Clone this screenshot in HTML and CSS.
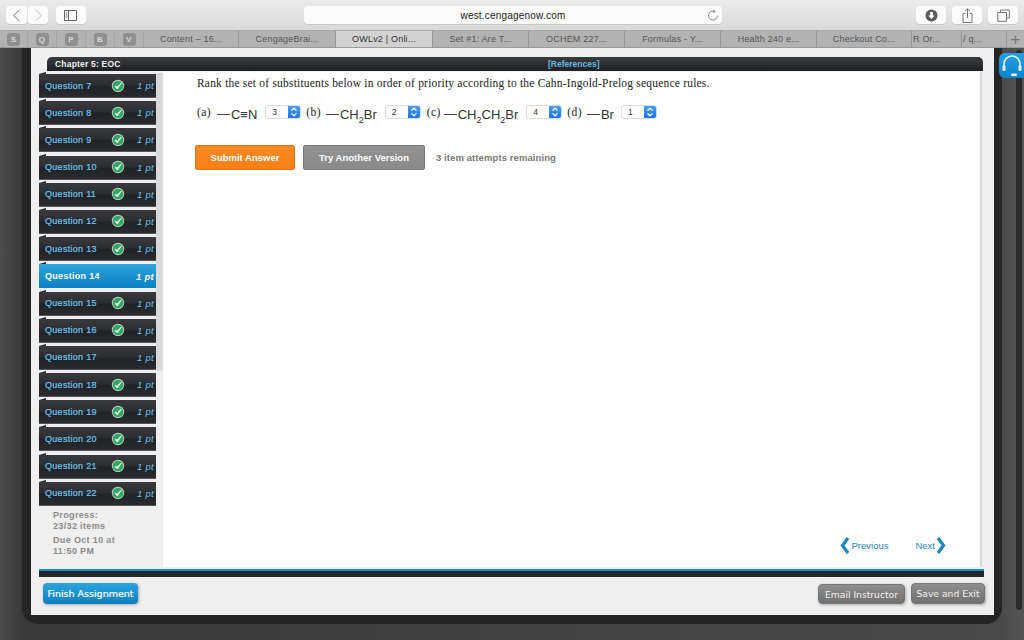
FILE: index.html
```html
<!DOCTYPE html>
<html lang="en">
<head>
<meta charset="utf-8">
<title>OWLv2</title>
<link rel="stylesheet" href="styles.css">
</head>
<body>
<svg class="defs" width="0" height="0" aria-hidden="true">
  <symbol id="ok" viewBox="0 0 14 14">
    <circle cx="7" cy="7.8" r="6.2" fill="#111" opacity=".45"/>
    <circle cx="7" cy="7" r="6.2" fill="#bcd2c4"/>
    <circle cx="7" cy="7" r="5.300" fill="#33a866"/>
    <path d="M4 7.300 6.200 10 10.400 4 6.300 7.900Z" fill="#fff" stroke="#fff" stroke-width=".7" stroke-linejoin="round"/>
  </symbol>
  <symbol id="updown" viewBox="0 0 12 14">
    <path d="M3.500 5.600 6 3.200 8.500 5.600M3.500 8.400 6 10.800 8.500 8.400" fill="none" stroke="#fff" stroke-width="1.300"/>
  </symbol>
</svg>

<header class="toolbar">
  <div class="btn-group">
    <button class="tool back"><svg width="9" height="13" viewBox="0 0 9 13"><path d="M7.500 1 1.500 6.500 7.500 12" fill="none" stroke="#777" stroke-width="1"/></svg></button>
    <button class="tool fwd"><svg width="9" height="13" viewBox="0 0 9 13"><path d="M1.500 1 7.500 6.500 1.500 12" fill="none" stroke="#c4c4c4" stroke-width="1"/></svg></button>
  </div>
  <button class="tool wide"><svg width="13" height="11" viewBox="0 0 13 11"><path d="M.5.5h12v10H.5zM4.500.5v10M1.700 3h1.600M1.700 5h1.600M1.700 7h1.600" fill="none" stroke="#666"/></svg></button>
  <div class="address">
    <span class="url">west.cengagenow.com</span>
    <svg class="reload" width="12" height="13" viewBox="0 0 12 13"><path d="M7.600 2.400A4.500 4.500 0 1 0 10.500 6.600" fill="none" stroke="#888"/><path d="M6.400.6 8.800 2.400 6.400 4.200Z" fill="#888"/></svg>
  </div>
  <div class="tool-right">
    <button class="tool wide"><svg width="13" height="13" viewBox="0 0 13 13"><circle cx="6.500" cy="6.500" r="6" fill="#5a5a5a"/><path d="M5.100 3h2.800v3.400h1.800L6.500 10 3.300 6.400h1.800Z" fill="#fff"/></svg></button>
    <button class="tool wide"><svg width="11" height="15" viewBox="0 0 11 15"><path d="M3.300 5.500H1v9h9v-9H7.700M5.500 10V1M3 3.200 5.500 .8 8 3.200" fill="none" stroke="#777"/></svg></button>
    <button class="tool wide"><svg width="13" height="13" viewBox="0 0 13 13"><path d="M3.500 3.500V1h8.800v8H9.500M.8 3.500h8.700v8.800H.8z" fill="none" stroke="#777"/></svg></button>
  </div>
</header>

<nav class="tabs">
  <div class="fav"><b>S</b></div>
  <div class="fav"><b>Q</b></div>
  <div class="fav"><b>P</b></div>
  <div class="fav"><b>B</b></div>
  <div class="fav last"><b>V</b></div>
  <div class="tab">Content – 16...</div>
  <div class="tab">CengageBrai...</div>
  <div class="tab active">OWLv2 | Onli...</div>
  <div class="tab">Set #1: Are T...</div>
  <div class="tab">OCHEM 227...</div>
  <div class="tab">Formulas - Y...</div>
  <div class="tab">Health 240 e...</div>
  <div class="tab">Checkout Co...</div>
  <div class="tab mini one">R Or...</div>
  <div class="tab mini two">/ q...</div>
  <div class="plus">+</div>
</nav>

<main class="stage">
  <div class="frame">
    <section class="panel">
      <div class="chapter">
        <span class="chapter-title">Chapter 5: EOC</span>
        <a class="refs">[References]</a>
      </div>
      <div class="body-row">
        <aside class="side">
          <div class="side-scroll"></div>
          <ul class="questions">
            <li class="q"><span class="q-name">Question 7</span><svg class="ok"><use href="#ok"/></svg><i>1 pt</i></li>
            <li class="q"><span class="q-name">Question 8</span><svg class="ok"><use href="#ok"/></svg><i>1 pt</i></li>
            <li class="q"><span class="q-name">Question 9</span><svg class="ok"><use href="#ok"/></svg><i>1 pt</i></li>
            <li class="q"><span class="q-name">Question 10</span><svg class="ok"><use href="#ok"/></svg><i>1 pt</i></li>
            <li class="q"><span class="q-name">Question 11</span><svg class="ok"><use href="#ok"/></svg><i>1 pt</i></li>
            <li class="q"><span class="q-name">Question 12</span><svg class="ok"><use href="#ok"/></svg><i>1 pt</i></li>
            <li class="q"><span class="q-name">Question 13</span><svg class="ok"><use href="#ok"/></svg><i>1 pt</i></li>
            <li class="q current"><span class="q-name">Question 14</span><i>1 pt</i></li>
            <li class="q"><span class="q-name">Question 15</span><svg class="ok"><use href="#ok"/></svg><i>1 pt</i></li>
            <li class="q"><span class="q-name">Question 16</span><svg class="ok"><use href="#ok"/></svg><i>1 pt</i></li>
            <li class="q"><span class="q-name">Question 17</span><i>1 pt</i></li>
            <li class="q"><span class="q-name">Question 18</span><svg class="ok"><use href="#ok"/></svg><i>1 pt</i></li>
            <li class="q"><span class="q-name">Question 19</span><svg class="ok"><use href="#ok"/></svg><i>1 pt</i></li>
            <li class="q"><span class="q-name">Question 20</span><svg class="ok"><use href="#ok"/></svg><i>1 pt</i></li>
            <li class="q"><span class="q-name">Question 21</span><svg class="ok"><use href="#ok"/></svg><i>1 pt</i></li>
            <li class="q"><span class="q-name">Question 22</span><svg class="ok"><use href="#ok"/></svg><i>1 pt</i></li>
          </ul>
          <div class="progress">
            <p>Progress:<br>23/32 items</p>
            <p>Due Oct 10 at<br>11:50 PM</p>
          </div>
        </aside>
        <article class="main">
          <div class="content">
            <p class="prompt">Rank the set of substituents below in order of priority according to the Cahn-Ingold-Prelog sequence rules.</p>
            <div class="answers">
              <span class="lab la">(a)</span><span class="chem ca"><span class="dash"></span>C≡N</span>
              <span class="sel">3<span class="step"><svg width="12" height="14"><use href="#updown"/></svg></span></span>
              <span class="lab lb">(b)</span><span class="chem cb"><span class="dash"></span>CH<sub>2</sub>Br</span>
              <span class="sel">2<span class="step"><svg width="12" height="14"><use href="#updown"/></svg></span></span>
              <span class="lab lc">(c)</span><span class="chem cc"><span class="dash"></span>CH<sub>2</sub>CH<sub>2</sub>Br</span>
              <span class="sel">4<span class="step"><svg width="12" height="14"><use href="#updown"/></svg></span></span>
              <span class="lab ld">(d)</span><span class="chem cd"><span class="dash"></span>Br</span>
              <span class="sel">1<span class="step"><svg width="12" height="14"><use href="#updown"/></svg></span></span>
            </div>
            <div class="actions">
              <button class="act submit">Submit Answer</button>
              <button class="act another">Try Another Version</button>
              <span class="remaining">3 item attempts remaining</span>
            </div>
          </div>
          <div class="pager">
            <a class="page prev"><svg width="10" height="17" viewBox="0 0 10 17"><path d="M8 1 2.500 8.500 8 16" fill="none" stroke="#1b87bf" stroke-width="3.200"/></svg>Previous</a>
            <a class="page next">Next<svg width="10" height="17" viewBox="0 0 10 17"><path d="M2 1 7.500 8.500 2 16" fill="none" stroke="#1b87bf" stroke-width="3.200"/></svg></a>
          </div>
        </article>
      </div>
      <div class="rule"></div>
      <footer class="foot">
        <button class="finish">Finish Assignment</button>
        <div class="foot-right">
          <button class="gray email">Email Instructor</button>
          <button class="gray save">Save and Exit</button>
        </div>
      </footer>
    </section>
  </div>
  <div class="help"><svg width="22" height="24" viewBox="0 0 22 24"><path d="M3 15V10a8 8 0 0 1 16 0v5" fill="none" stroke="#e4f2fa" stroke-width="1.600"/><rect x="1.500" y="11" width="3" height="6" rx="1.500" fill="#e4f2fa"/><rect x="17.500" y="11" width="3" height="6" rx="1.500" fill="#e4f2fa"/><rect x="10" y="19.500" width="6" height="2.500" rx="1.200" fill="#e4f2fa"/></svg></div>
  <div class="track"></div>
</main>
</body>
</html>
```

FILE: styles.css
```css
* { box-sizing: border-box; }
html, body { margin: 0; height: 640px; overflow: hidden; }
body { display: flex; flex-direction: column; font-family: "Liberation Sans", Arial, sans-serif; background: #444; }
.defs { position: absolute; }
button { font-family: inherit; padding: 0; cursor: default; }
p { margin: 0; }
ul { list-style: none; margin: 0; padding: 0; }

/* browser toolbar */
.toolbar { height: 30px; flex: none; display: flex; align-items: center; padding: 0 6px; background: linear-gradient(#ececec, #d9d9d9); }
.btn-group { display: flex; gap: 1px; margin-right: 8px; }
.tool { height: 18px; width: 20px; border: 0; border-radius: 4px; background: #fbfbfb; box-shadow: 0 1px 0 #c9c9c9; display: flex; align-items: center; justify-content: center; }
.tool.back { width: 21px; }
.tool.wide { width: 30px; }
.address { width: 419px; height: 18px; margin-left: 218px; border-radius: 4px; background: #fbfbfb; box-shadow: 0 1px 0 #c9c9c9; display: flex; align-items: center; justify-content: center; position: relative; }
.url { font-size: 10px; color: #222; letter-spacing: .2px; }
.reload { position: absolute; right: 3px; top: 3px; }
.tool-right { display: flex; gap: 6px; margin-left: 194px; }

/* tab strip */
.tabs { height: 18px; flex: none; display: flex; background: #b2b2b2; border-top: 1px solid #a8a8a8; border-bottom: 1px solid #9c9c9c; font-size: 9px; color: #555; letter-spacing: .2px; }
.fav { width: 29px; display: flex; align-items: center; justify-content: center; border-right: 1px solid #a6a6a6; }
.fav:first-child { width: 28px; }
.fav b { width: 13px; height: 13px; border-radius: 3px; background: #8f8f8f; color: #d8d8d8; font-size: 8px; display: flex; align-items: center; justify-content: center; }
.tab { width: 96px; display: flex; align-items: center; justify-content: center; border-right: 1px solid #969696; white-space: nowrap; }
.tab:nth-child(6) { width: 95px; }
.tab:nth-child(7), .tab:nth-child(8) { width: 97px; }
.tab:nth-child(13) { width: 95px; }
.tab.active { background: #d2d2d2; color: #333; }
.tab.mini { justify-content: flex-start; padding-left: 1px; overflow: hidden; }
.tab.mini.one { width: 50px; }
.tab.mini.two { width: 45px; }
.plus { flex: 1; display: flex; align-items: center; justify-content: center; font-size: 17px; color: #777; line-height: 1; }

/* desktop behind the page */
.stage { flex: 1; display: flex; position: relative; padding-left: 22px; background: linear-gradient(90deg, #4d4d4d, #3a3a3a 22px, #4a4a4a 1002px, #555); }
.frame { width: 980px; height: 576px; padding: 0 8px 9px 9px; background: #252525; border-radius: 0 0 16px 16px; }
.panel { height: 100%; background: #efefef; padding: 9px 10px 0 8px; display: flex; flex-direction: column; }
.help { position: absolute; z-index: 1; left: 999px; top: 5px; width: 25px; height: 25px; border-radius: 6px 0 0 6px; background: linear-gradient(#23a0e4, #0d85cc); display: flex; align-items: center; justify-content: center; }
.track { position: absolute; left: 1016px; top: 2px; bottom: 30px; width: 6px; border-radius: 3px; background: #2b2b2b; }

/* chapter bar */
.chapter { height: 14px; margin-left: 8px; margin-right: 1px; flex: none; border-radius: 5px 5px 0 0; background: linear-gradient(#3a3b3e, #1f2023); display: flex; align-items: center; position: relative; font-size: 8.5px; font-weight: 700; }
.chapter-title { margin-left: 8px; color: #f0f0f0; letter-spacing: .2px; }
.refs { position: absolute; left: 501px; color: #62b8e4; }

.body-row { flex: 1; min-height: 0; display: flex; padding: 2px 2px 0 0; margin-bottom: 2px; }

/* sidebar */
.side { width: 124px; flex: none; position: relative; }
.side-scroll { position: absolute; left: 117px; top: 0; width: 7px; height: 298px; background: #d9d9d9; border-radius: 0 0 3px 3px; }
.questions { padding-top: 1px; display: flex; flex-direction: column; gap: 3.190px; position: relative; width: 117px; }
.q { height: 24px; position: relative; display: flex; align-items: center; padding: 0 2px 0 6px; background: linear-gradient(#3a3b3e 0, #2c2d30 46%, #222326 54%, #2a2b2e 100%); border-bottom: 1px solid #55565a; font-size: 9px; color: #6ac6f0; letter-spacing: .3px; }
.q::before { content: ""; position: absolute; left: 0; top: -2px; border-style: solid; border-width: 0 0 2px 7px; border-color: transparent transparent #2a2b2e transparent; }
.q-name { width: 65px; white-space: nowrap; -webkit-text-stroke: .2px #6ac6f0; }
.q i { margin-left: auto; font-size: 9.500px; font-style: italic; }
.ok { width: 14px; height: 14px; margin-left: 1px; flex: none; }
.q.current { background: linear-gradient(#2fa3da, #0b80c2); border-bottom: 0; color: #fff; font-weight: 700; }
.q.current .q-name { -webkit-text-stroke: 0; }
.progress { margin: 4px 0 0 14px; font-size: 9px; font-weight: 700; color: #8b8b8b; line-height: 11px; letter-spacing: .35px; display: flex; flex-direction: column; gap: 3px; }

/* main */
.main { flex: 1; margin-top: -1px; background: #fff; display: flex; flex-direction: column; justify-content: space-between; box-shadow: inset -2px 0 0 #d6d6d6; }
.content { padding: 4px 0 0 34px; }
.prompt { font-family: "Liberation Serif", "Times New Roman", serif; font-size: 11.500px; line-height: 14px; color: #222; letter-spacing: .2px; white-space: nowrap; }
.answers { margin-top: 13px; display: flex; align-items: center; height: 17px; white-space: nowrap; }
.lab { font-family: "Liberation Serif", "Times New Roman", serif; font-size: 11.500px; color: #222; letter-spacing: .4px; }
.chem { font-size: 13px; color: #333; display: flex; align-items: center; line-height: 15px; margin-top: 6px; }
.chem sub { font-size: 9px; line-height: 1; align-self: flex-end; margin-bottom: -3px; }
.dash { width: 13px; height: 1px; background: #444; margin-right: 1px; }
.ca { margin-left: 6px; margin-right: 8px; }
.cb { margin-left: 5px; margin-right: 8px; }
.cc { margin-left: 3px; margin-right: 8px; }
.cd { margin-left: 5px; margin-right: 7px; }
.lb { margin-left: 5px; }
.lc { margin-left: 6px; }
.ld { margin-left: 5px; }
.sel { width: 36px; height: 14px; border: 1px solid #dcdcdc; border-radius: 3px; background: #fff; font-size: 8.500px; color: #333; display: flex; align-items: center; padding-left: 6px; position: relative; overflow: hidden; }
.step { position: absolute; right: 0; top: -1px; width: 12px; height: 14px; background: linear-gradient(#4da2f5, #1672e0); }
.step svg { display: block; }
.actions { margin-top: 25px; display: flex; align-items: center; margin-left: -2px; }
.act { height: 25px; border-radius: 2px; font-size: 9.500px; font-weight: 700; color: #fff; }
.submit { width: 100px; border: 1px solid #e8761a; background: linear-gradient(#fb8a26, #f97f14); }
.another { width: 122px; margin-left: 8px; border: 1px solid #777; background: linear-gradient(#929292, #8a8a8a); }
.remaining { margin-left: 11px; font-size: 9.500px; font-weight: 700; color: #7a7a7a; letter-spacing: .09px; }
.pager { padding: 0 36px 13px 0; display: flex; justify-content: flex-end; gap: 27px; font-size: 9.500px; color: #2188c0; }
.page { display: flex; align-items: center; gap: 1px; }

/* bottom */
.rule { height: 8px; flex: none; border-top: 2px solid #0e8fd0; background: #26272a; }
.foot { height: 38px; flex: none; display: flex; align-items: flex-start; justify-content: space-between; padding: 6px 0 0 4px; margin-right: -1px; font-family: "DejaVu Sans", Verdana, sans-serif; }
.finish { width: 95px; height: 21px; border: 0; border-radius: 4px; background: linear-gradient(#2ba3de, #0f7fbe); color: #fff; font-size: 9.500px; font-family: inherit; box-shadow: 1px 1px 3px #aaa; -webkit-text-stroke: .2px #fff; }
.foot-right { display: flex; gap: 6px; }
.gray { height: 21px; border: 1px solid #777; border-radius: 4px; background: linear-gradient(#8e8e8e, #707070); color: #f1f1f1; font-size: 9.200px; font-family: inherit; box-shadow: 1px 1px 3px #aaa; }
.email { width: 87px; margin-top: 1px; height: 20px; }
.save { width: 74px; }
```
